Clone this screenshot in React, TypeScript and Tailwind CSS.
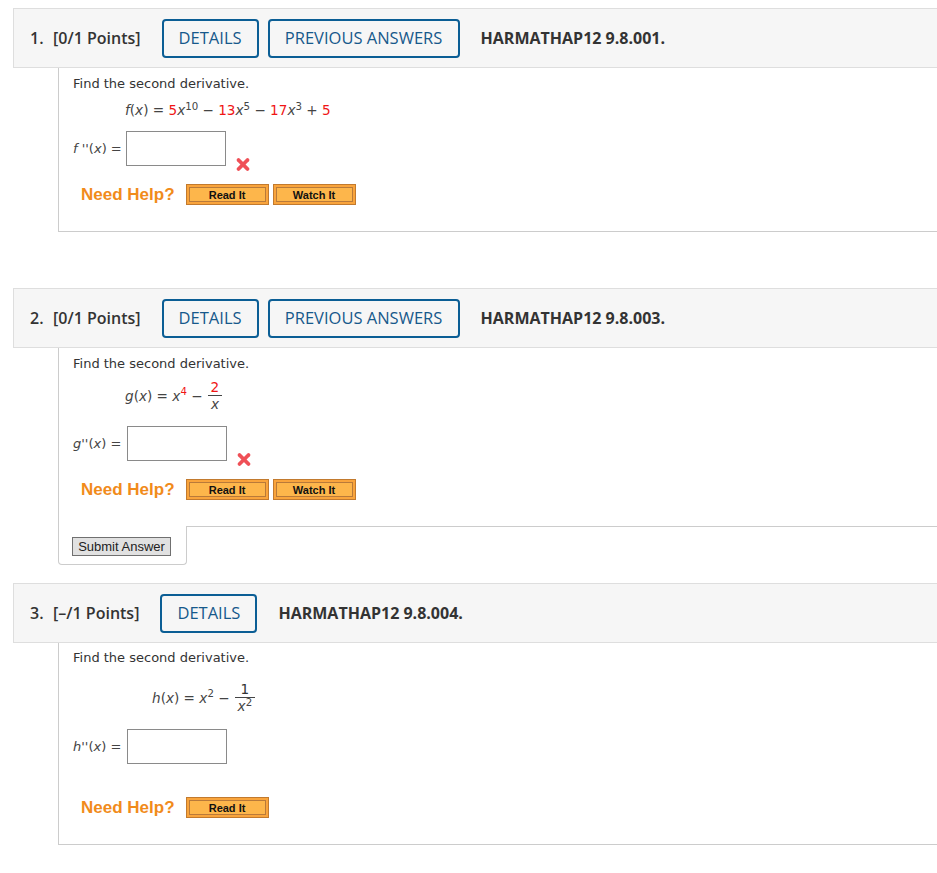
import React from "react";

const body = "font-['Verdana','DejaVu_Sans',sans-serif]";

type HeaderProps = {
  n: number;
  score: string;
  prev?: boolean;
  code: string;
};

const QuestionHeader: React.FC<HeaderProps> = ({ n, score, prev, code }) => (
  <div className="ml-[13px] flex h-[60px] items-center border-y border-l border-[#dedede] bg-[#f6f6f6] pl-[16px] font-['Open_Sans',sans-serif] text-[16px] text-[#333]">
    <span className="w-[23px] font-semibold">{n}.</span>
    <span className="font-semibold">[{score} Points]</span>
    <button className="ml-[21px] h-[39px] w-[97px] rounded-[4px] border-2 border-[#0b5e95] text-[16.5px] text-[#17598b]">
      DETAILS
    </button>
    {prev && (
      <button className="ml-[9px] h-[39px] w-[192px] rounded-[4px] border-2 border-[#0b5e95] text-[16.5px] text-[#17598b]">
        PREVIOUS ANSWERS
      </button>
    )}
    <span className="ml-[21px] font-bold">{code}</span>
  </div>
);

const OrangeButton: React.FC<{ label: string }> = ({ label }) => (
  <div className="h-[21px] w-[83px] border border-[#c27a2e] bg-[#f9a43c] p-[2px]">
    <div className="flex h-full items-center justify-center border border-[#b97a3a] bg-[#fdb64b] font-['Liberation_Sans',Arial,sans-serif] text-[11px] font-bold text-[#111]">
      {label}
    </div>
  </div>
);

const NeedHelp: React.FC<{ watch?: boolean; top: string }> = ({ watch, top }) => (
  <div className={`ml-[8px] flex items-center ${top}`}>
    <span className="mr-[11px] font-['Liberation_Sans',Arial,sans-serif] text-[17px] font-bold text-[#f18b1b]">
      Need Help?
    </span>
    <OrangeButton label="Read It" />
    {watch && (
      <div className="ml-[4px]">
        <OrangeButton label="Watch It" />
      </div>
    )}
  </div>
);

const WrongMark = () => (
  <svg width="16" height="15" viewBox="0 0 16 15" className="ml-[9px] mb-[-6px] shrink-0">
    <g stroke="#ef5057" strokeWidth="3.8" strokeLinecap="round">
      <line x1="3.5" y1="3" x2="12.5" y2="12" />
      <line x1="12.5" y1="3" x2="3.5" y2="12" />
    </g>
  </svg>
);

const AnswerRow: React.FC<{ fn: string; top: string; wrong?: boolean; gap: string }> = ({
  fn,
  top,
  wrong,
  gap,
}) => (
  <div className={`flex items-end ${top}`}>
    <span className={`mb-[9px] text-[#444] ${gap}`}>
      <i>{fn}</i>
      {"''("}
      <i>x</i>) =
    </span>
    <input className="h-[35px] w-[100px] border border-[#8a8a8a] bg-white outline-none" />
    {wrong && <WrongMark />}
  </div>
);

const Frac: React.FC<{ num: React.ReactNode; den: React.ReactNode }> = ({ num, den }) => (
  <span className="mx-[5px] inline-flex flex-col items-center leading-[16px]">
    <span className="px-[3px]">{num}</span>
    <span className="h-px w-full bg-[#444]" />
    <span className="px-[3px]">{den}</span>
  </span>
);

const red = "text-[#f01515]";

export default function App() {
  return (
    <div className={`min-h-screen w-[937px] bg-white pt-[8px] ${body} text-[13px] leading-[16px] text-[#333]`}>
      {/* question 1 */}
      <QuestionHeader n={1} score="0/1" prev code="HARMATHAP12 9.8.001." />
      <div className="ml-[58px] border-b border-l border-[#cccccc] pb-[26px] pl-[14px] pt-[8px]">
        <p>Find the second derivative.</p>
        <p className="ml-[52px] mt-[10px] text-[13.6px] text-[#444]">
          <i>f</i>(<i>x</i>) = <span className={red}>5</span>
          <i>x</i>
          <sup>10</sup> − <span className={red}>13</span>
          <i>x</i>
          <sup>5</sup> − <span className={red}>17</span>
          <i>x</i>
          <sup>3</sup> + <span className={red}>5</span>
        </p>
        <AnswerRow fn="f " top="mt-[13px]" gap="mr-[4px]" wrong />
        <NeedHelp watch top="mt-[18px]" />
      </div>

      {/* question 2 */}
      <div className="mt-[56px]">
        <QuestionHeader n={2} score="0/1" prev code="HARMATHAP12 9.8.003." />
        <div className="ml-[58px] border-l border-[#cccccc] pb-[26px] pl-[14px] pt-[8px]">
          <p>Find the second derivative.</p>
          <div className="ml-[52px] mt-[7px] flex items-center text-[13.6px] text-[#444]">
            <span>
              <i>g</i>(<i>x</i>) = <i>x</i>
              <sup className={red}>4</sup> −
            </span>
            <Frac num={<span className={red}>2</span>} den={<i>x</i>} />
          </div>
          <AnswerRow fn="g" top="mt-[14px]" gap="mr-[6px]" wrong />
          <NeedHelp watch top="mt-[18px]" />
        </div>
        <div className="ml-[58px] flex">
          <div className="h-[39px] w-[129px] shrink-0 rounded-b-[4px] border-x border-b border-[#cccccc] pl-[13px] pt-[11px]">
            <button className="h-[19px] w-[99px] border border-[#707070] bg-[#e1e1e1] font-['Liberation_Sans',Arial,sans-serif] text-[13px] leading-[17px] text-[#222]">
              Submit Answer
            </button>
          </div>
          <div className="flex-1 border-t border-[#cccccc]" />
        </div>
      </div>

      {/* question 3 */}
      <div className="mt-[18px]">
        <QuestionHeader n={3} score="–/1" code="HARMATHAP12 9.8.004." />
        <div className="ml-[58px] border-b border-l border-[#cccccc] pb-[26px] pl-[14px] pt-[7px]">
          <p>Find the second derivative.</p>
          <div className="ml-[79px] mt-[15px] flex items-center text-[13.6px] text-[#444]">
            <span>
              <i>h</i>(<i>x</i>) = <i>x</i>
              <sup>2</sup> −
            </span>
            <Frac
              num={<span className="text-[#333]">1</span>}
              den={
                <span>
                  <i>x</i>
                  <sup>2</sup>
                </span>
              }
            />
          </div>
          <AnswerRow fn="h" top="mt-[15px]" gap="mr-[6px]" />
          <NeedHelp top="mt-[33px]" />
        </div>
      </div>
    </div>
  );
}
